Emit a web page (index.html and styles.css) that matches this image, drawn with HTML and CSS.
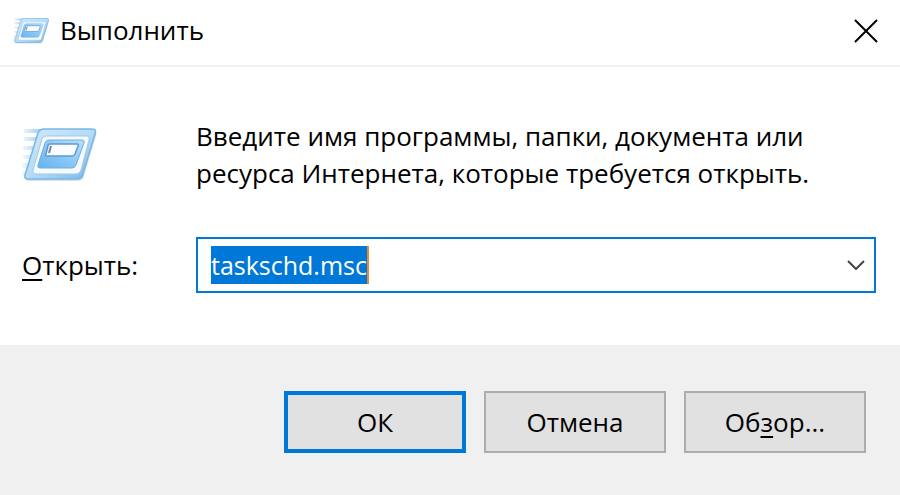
FILE: index.html
```html
<!DOCTYPE html>
<html lang="ru">
<head>
<meta charset="utf-8">
<meta name="viewport" content="width=device-width, initial-scale=1">
<title>Выполнить</title>
<link rel="stylesheet" href="styles.css">
</head>
<body>
<svg class="defs" aria-hidden="true">
  <defs>
    <linearGradient id="frame" x1="0" y1="0" x2="1" y2="1">
      <stop offset="0" stop-color="#d2eafa"/>
      <stop offset="0.5" stop-color="#b5dcf7"/>
      <stop offset="1" stop-color="#79b5e8"/>
    </linearGradient>
    <linearGradient id="panel" x1="0" y1="1" x2="1" y2="0">
      <stop offset="0" stop-color="#64b2f0"/>
      <stop offset="0.5" stop-color="#8cc9f6"/>
      <stop offset="1" stop-color="#b9dff9"/>
    </linearGradient>
    <linearGradient id="trail" x1="0" y1="0" x2="1" y2="0">
      <stop offset="0" stop-color="#8fc6ee" stop-opacity="0.1"/>
      <stop offset="1" stop-color="#8fc6ee"/>
    </linearGradient>
    <symbol id="run" viewBox="0 0 76 54">
      <g fill="url(#trail)">
        <path d="M2 1h20l-2 4H2zM2 9h18l-2 4H2zM1 18h16l-2 4H1zM1 27h14l-2 4H1zM0 35h12l-2 5H0zM0 43h9l-2 5H0z"/>
      </g>
      <path d="M24 3H71Q76 3 74 8L62 48Q61 53 56 53H7Q3 53 4 49L19 7Q20 3 24 3Z" fill="#8fa9bf" opacity=".35"/>
      <path d="M22 1H70Q75 1 73 6L61 46Q60 51 55 51H6Q2 51 3 47L16 5Q18 1 22 1Z" fill="url(#frame)" stroke="#79b6e6" stroke-width="1.5"/>
      <path d="M24 8H64Q68 8 67 12L59 42Q58 46 54 46H14Q10 46 11 42L20 11Q21 8 24 8Z" fill="#f5faff" stroke="#a3c8e6"/>
      <path d="M27 12H60Q63 12 62 15L54 37Q53 40 50 40H18Q15 40 16 37L23 15Q24 12 27 12Z" fill="url(#panel)" stroke="#71afe2"/>
      <path d="M28 16H55Q57 16 56 18L53 26Q52 28 50 28H25Q23 28 24 26L26 18Q26 16 28 16Z" fill="#fafcff" stroke="#5d99cd" stroke-width="1.5"/>
      <path d="M29 18l-2 7" fill="none" stroke="#72869b" stroke-width="2"/>
    </symbol>
  </defs>
</svg>
<form class="dialog">
  <header class="titlebar">
    <svg class="icon-small" aria-hidden="true"><use href="#run"/></svg>
    <h1 class="title">Выполнить</h1>
    <button class="close" type="button" aria-label="Закрыть">
      <svg viewBox="0 0 24 24" aria-hidden="true"><path d="M1 1L23 23M23 1L1 23"/></svg>
    </button>
  </header>
  <main class="content">
    <svg class="icon-large" aria-hidden="true"><use href="#run"/></svg>
    <p class="message">Введите имя программы, папки, документа или ресурса Интернета, которые требуется открыть.</p>
    <label class="label" for="command"><u>О</u>ткрыть:</label>
    <div class="combo">
      <input class="command" id="command" type="text" value="taskschd.msc" spellcheck="false">
      <button class="expand" type="button" aria-label="Показать список">
        <svg viewBox="0 0 18 10" aria-hidden="true"><path d="M1 1L9 9L17 1"/></svg>
      </button>
    </div>
  </main>
  <footer class="actions">
    <button class="button button-default" type="submit">ОК</button>
    <button class="button" type="button">Отмена</button>
    <button class="button" type="button">Об<u>з</u>ор...</button>
  </footer>
</form>
</body>
</html>
```

FILE: styles.css
```css
* {
  box-sizing: border-box;
}

body {
  margin: 0;
  background: #f0f0f0;
  color: #000;
  font: 26px/37px "Open Sans", "Noto Sans", sans-serif;
}

button,
input {
  font: inherit;
  color: inherit;
}

u {
  text-decoration-thickness: 2px;
  text-underline-offset: 4px;
}

.defs {
  position: absolute;
  width: 0;
  height: 0;
}

.dialog {
  display: flex;
  flex-direction: column;
  min-height: 100vh;
}

.titlebar {
  display: flex;
  align-items: center;
  gap: 10px;
  padding: 12px 22px 16px 13px;
  border-bottom: 2px solid #f0f0f0;
  background: #fff;
}

.icon-small {
  width: 37px;
  height: 26px;
}

.title {
  flex: 1;
  margin: 0;
  font-size: 26px;
  font-weight: 400;
}

.close,
.expand {
  display: flex;
  padding: 0;
  border: 0;
  background: none;
}

.close svg {
  width: 24px;
  height: 24px;
  fill: none;
  stroke: #000;
  stroke-width: 2;
}

.content {
  display: grid;
  grid-template-columns: 174px 1fr;
  align-items: center;
  row-gap: 45px;
  padding: 51px 24px 52px 22px;
  background: #fff;
}

.icon-large {
  width: 76px;
  height: 54px;
}

.message {
  max-width: 660px;
  margin: 0;
}

.combo {
  display: flex;
  align-items: center;
  justify-content: space-between;
  height: 56px;
  padding: 0 9px 0 13px;
  border: 2px solid #0078d7;
}

.command {
  field-sizing: content;
  height: 38px;
  padding: 0;
  border: 0;
  border-right: 2px solid #e88a2c;
  outline: 0;
  background: #0078d7;
  color: #fff;
  font-size: 25px;
}

.expand svg {
  width: 18px;
  height: 10px;
  fill: none;
  stroke: #444;
  stroke-width: 2;
}

.actions {
  flex: 1;
  display: flex;
  align-items: flex-start;
  justify-content: flex-end;
  gap: 18px;
  padding: 46px 34px 42px;
}

.button {
  width: 182px;
  height: 62px;
  padding: 0;
  border: 2px solid #adadad;
  background: #e1e1e1;
}

.button-default {
  border: 4px solid #0078d7;
}
```
